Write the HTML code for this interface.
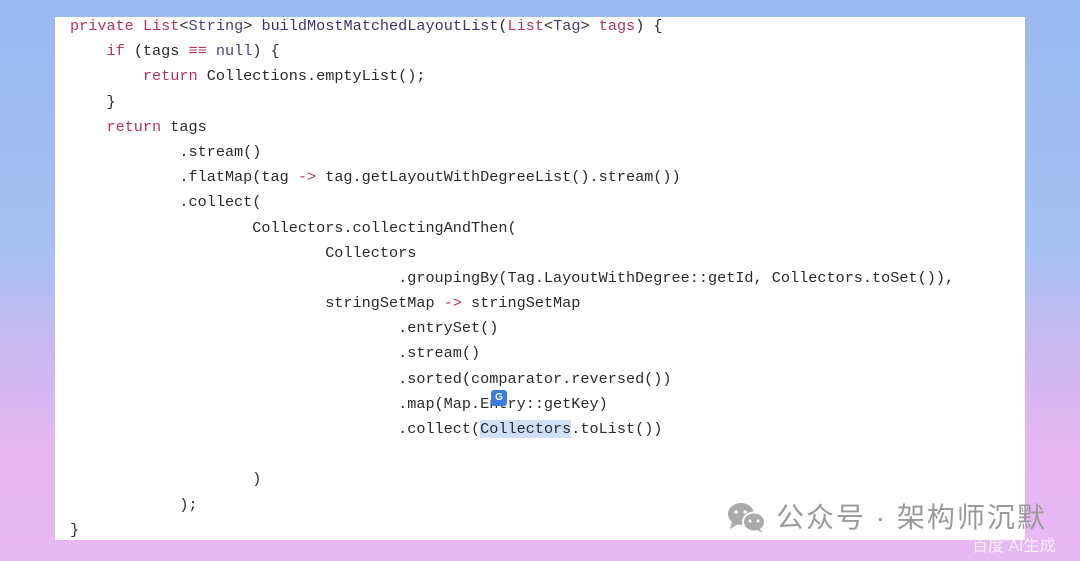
<!DOCTYPE html>
<html><head><meta charset="utf-8"><style>
html,body{margin:0;padding:0}
body{width:1080px;height:561px;overflow:hidden;position:relative;
background:linear-gradient(180deg,#9ab9f2 0%,#a7c0f2 45%,#c9b8ef 62%,#e6b6f0 80%,#e7b9f3 100%);}
.panel{position:absolute;left:55px;top:17px;width:970px;height:523px;background:#fff;}
.code{position:absolute;left:70px;top:14px;font-family:"Liberation Mono",monospace;font-size:15.2px;color:#2a2a2a;}
.code div{height:25.2px;line-height:25.2px;white-space:pre;overflow:visible}
.k{color:#b3325e}.t{color:#4a3f7a}.f{color:#3b3470}
.hl{background:#cfe0f7}
.wm{position:absolute;left:776px;top:500px;font-family:"Liberation Sans","Noto Sans CJK SC",sans-serif;font-size:28px;line-height:36px;color:#9a9a9a;letter-spacing:2px}
.bd{position:absolute;left:972px;top:536px;font-family:"Liberation Sans","Noto Sans CJK SC",sans-serif;font-size:16px;line-height:22px;color:rgba(255,255,255,.75)}
.g{position:absolute;left:491px;top:390px;width:16px;height:16px;background:#3d7be0;border-radius:3px;color:#fff;font:bold 10px "Liberation Sans",sans-serif;text-align:center;line-height:16px}
</style></head><body>
<div class="panel"></div>
<div class="code">
<div><span class="k">private</span> <span class="k">List</span>&lt;<span class="t">String</span>&gt; <span class="f">buildMostMatchedLayoutList</span>(<span class="k">List</span>&lt;<span class="t">Tag</span>&gt; <span class="k">tags</span>) {</div>
<div>    <span class="k">if</span> (tags <span class="k">≡≡</span> <span class="t">null</span>) {</div>
<div>        <span class="k">return</span> Collections.emptyList();</div>
<div>    }</div>
<div>    <span class="k">return</span> tags</div>
<div>            .stream()</div>
<div>            .flatMap(tag <span class="k">-&gt;</span> tag.getLayoutWithDegreeList().stream())</div>
<div>            .collect(</div>
<div>                    Collectors.collectingAndThen(</div>
<div>                            Collectors</div>
<div>                                    .groupingBy(Tag.LayoutWithDegree::getId, Collectors.toSet()),</div>
<div>                            stringSetMap <span class="k">-&gt;</span> stringSetMap</div>
<div>                                    .entrySet()</div>
<div>                                    .stream()</div>
<div>                                    .sorted(comparator.reversed())</div>
<div>                                    .map(Map.Entry::getKey)</div>
<div>                                    .collect(<span class="hl">Collectors</span>.toList())</div>
<div> </div>
<div>                    )</div>
<div>            );</div>
<div>}</div>
</div>
<div class="g">G</div>
<svg style="position:absolute;left:727px;top:502px" width="40" height="32" viewBox="0 0 40 32"><ellipse cx="14" cy="12" rx="13" ry="11" fill="#aaa"/><path d="M5 20 L3 27 L11 22Z" fill="#aaa"/><ellipse cx="27" cy="20" rx="11" ry="9.5" fill="#aaa" stroke="#fff" stroke-width="2"/><path d="M33 27 L36 31 L30 28Z" fill="#aaa"/><circle cx="9" cy="10" r="1.8" fill="#fff"/><circle cx="18" cy="10" r="1.8" fill="#fff"/><circle cx="23" cy="19" r="1.5" fill="#fff"/><circle cx="31" cy="19" r="1.5" fill="#fff"/></svg>
<div class="wm">公众号 · 架构师沉默</div>
<div class="bd">百度 AI生成</div>
</body></html>
